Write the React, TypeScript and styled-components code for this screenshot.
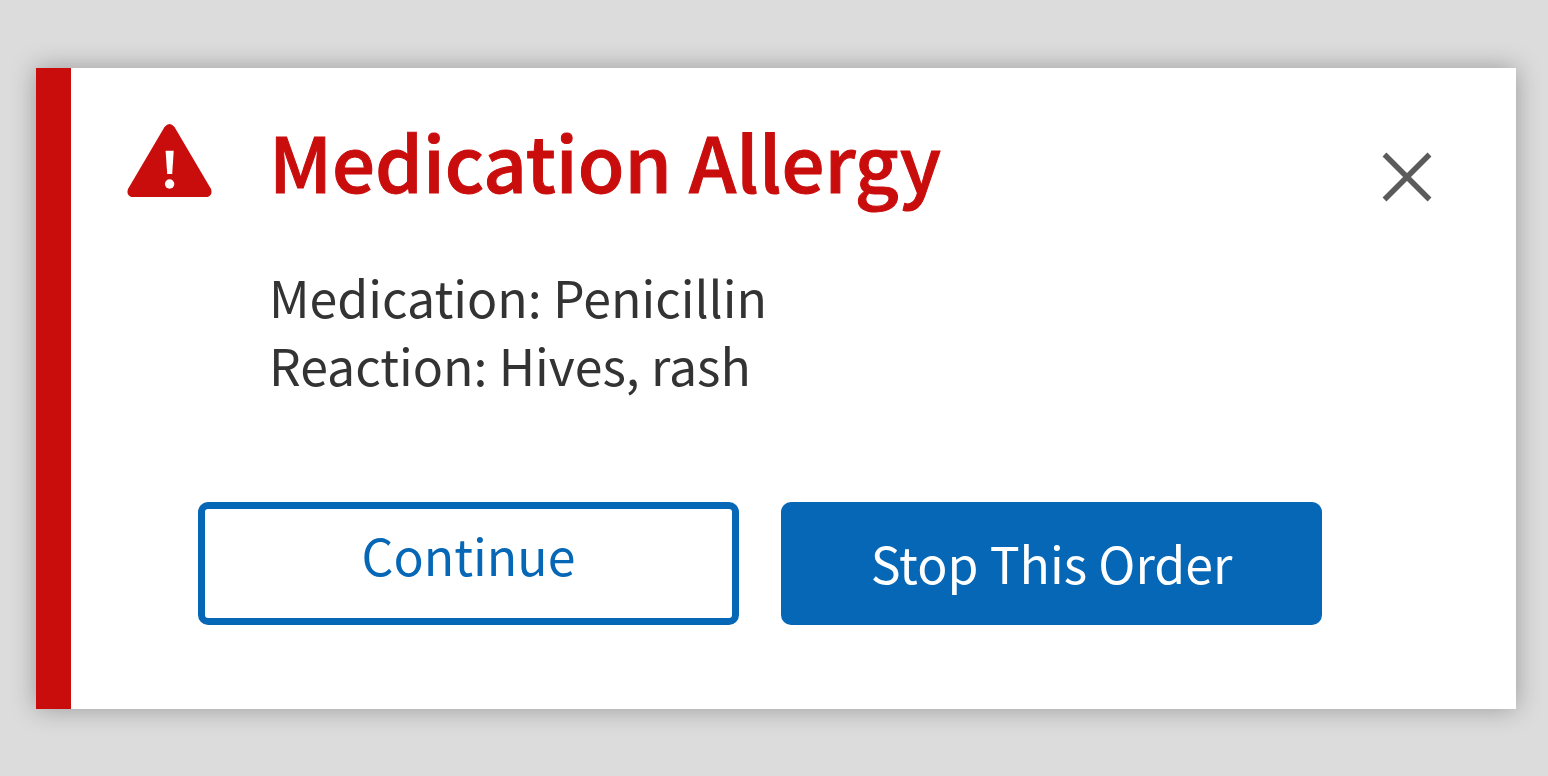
import React from 'react';
import styled, { createGlobalStyle } from 'styled-components';

const GlobalStyle = createGlobalStyle`
  *, *::before, *::after { box-sizing: border-box; }
  body {
    margin: 0;
    background: #dcdcdc;
    font-family: "Noto Sans CJK SC", "Liberation Sans", sans-serif;
  }
`;

const Page = styled.main`
  display: flex;
  align-items: center;
  min-height: 100vh;
  padding: 68px 32px 67px 36px;
`;

const Alert = styled.section`
  flex: 1;
  display: grid;
  grid-template-columns: 142px 1fr auto;
  row-gap: 60px;
  padding: 56px 84px 84px 56px;
  border-left: 35px solid #c90d0d;
  background: #fff;
  box-shadow: 0 0 24px rgba(0, 0, 0, 0.3);
`;

const WarningIcon = styled.svg`
  width: 86px;
  height: 74px;
`;

const Title = styled.h1`
  margin: 0;
  color: #c90d0d;
  font-size: 76px;
  font-weight: 500;
  line-height: 72px;
  -webkit-text-stroke: 1px currentColor;
  white-space: nowrap;
`;

const CloseButton = styled.button`
  display: flex;
  align-self: start;
  margin-top: 28px;
  padding: 0;
  border: 0;
  background: none;
  cursor: pointer;
`;

const Details = styled.div`
  grid-column: 2 / -1;
  color: #333;
  font-size: 50px;
  line-height: 68px;
`;

const Detail = styled.p`
  margin: 0;
`;

const Actions = styled.div`
  grid-column: 1 / -1;
  display: flex;
  flex-wrap: wrap;
  gap: 42px;
  margin: 44px 0 0 71px;
`;

const ActionButton = styled.button<{ $primary?: boolean }>`
  width: 541px;
  height: 123px;
  padding: ${(p) => (p.$primary ? '0 0 4px' : '0 0 20px')};
  border: 7px solid #0567b6;
  border-radius: 10px;
  background: ${(p) => (p.$primary ? '#0567b6' : '#fff')};
  color: ${(p) => (p.$primary ? '#fff' : '#0567b6')};
  font: inherit;
  font-size: 50px;
  line-height: 68px;
  cursor: pointer;
`;

export default function App() {
  return (
    <>
      <GlobalStyle />
      <Page>
        <Alert role="alertdialog" aria-labelledby="alert-title" aria-describedby="alert-details">
          <WarningIcon viewBox="0 0 86 74" aria-hidden="true">
            <path
              d="M37.500 3Q42.500 -3 47.500 3L84 65Q86 71 80.500 73H4.500Q-1 71 1 65Z"
              fill="#c90d0d"
            />
            <path d="M38.600 26.700H46.700L45.200 50H40.200Z" fill="#fff" />
            <circle cx="42.600" cy="60" r="4.700" fill="#fff" />
          </WarningIcon>
          <Title id="alert-title">Medication Allergy</Title>
          <CloseButton type="button" aria-label="Close">
            <svg width="50" height="50" viewBox="0 0 50 50" aria-hidden="true">
              <path d="M2.500 2.500L47.500 47.500M47.500 2.500L2.500 47.500" stroke="#5b5b5b" strokeWidth="5.500" />
            </svg>
          </CloseButton>
          <Details id="alert-details">
            <Detail>Medication: Penicillin</Detail>
            <Detail>Reaction: Hives, rash</Detail>
          </Details>
          <Actions>
            <ActionButton type="button">Continue</ActionButton>
            <ActionButton type="button" $primary>Stop This Order</ActionButton>
          </Actions>
        </Alert>
      </Page>
    </>
  );
}
